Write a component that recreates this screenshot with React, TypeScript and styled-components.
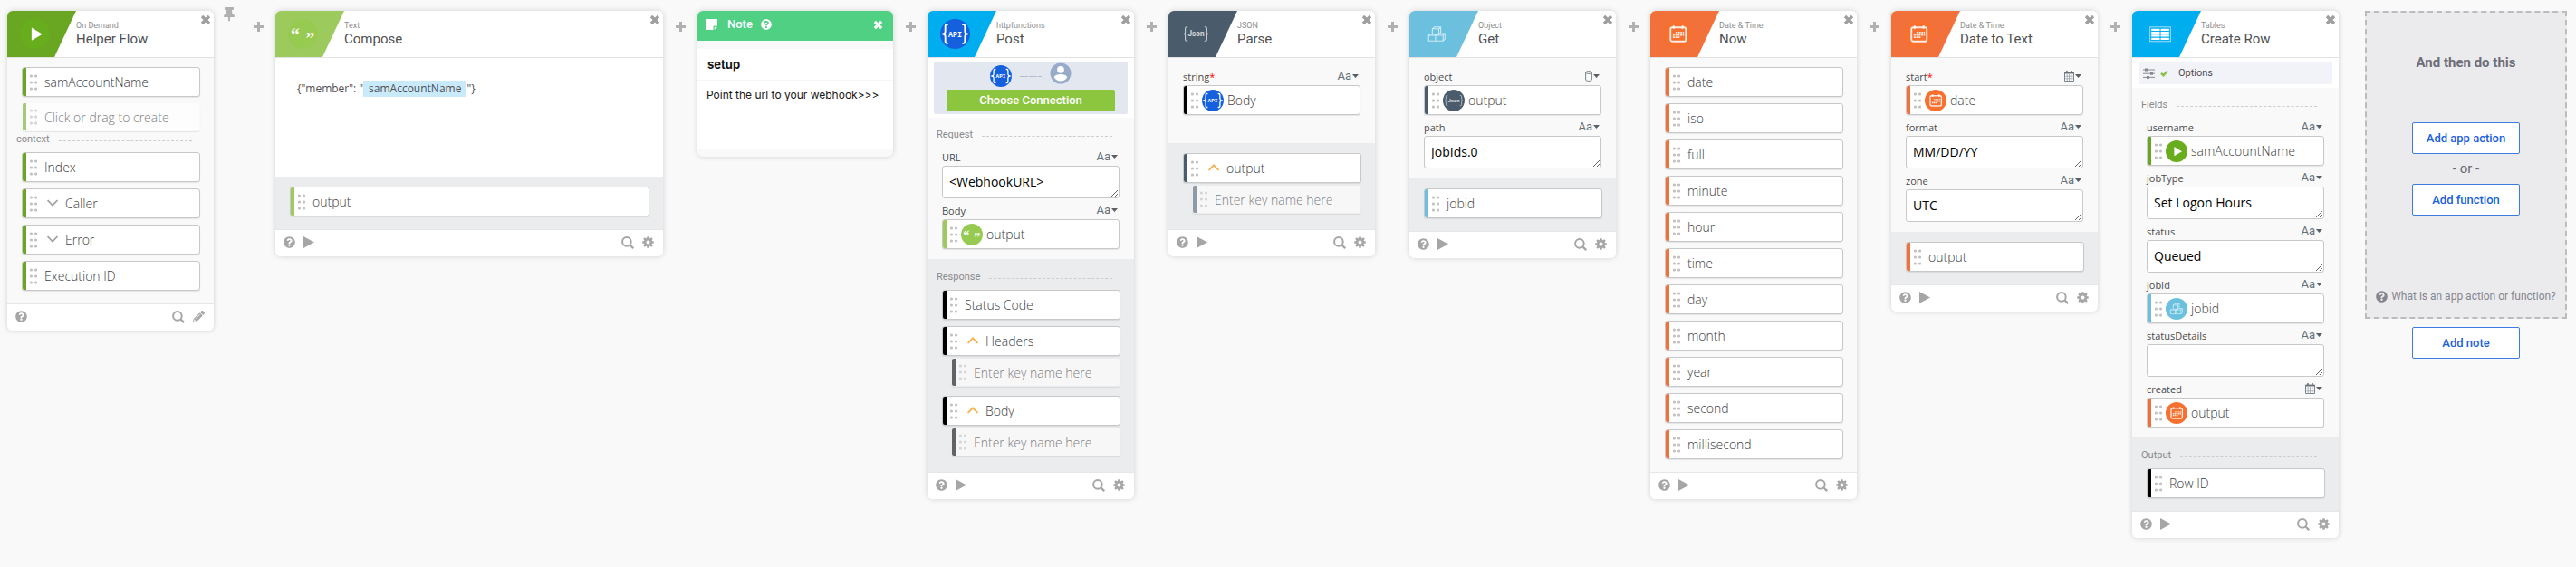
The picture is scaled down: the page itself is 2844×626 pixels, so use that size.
import React from 'react';
import styled, { createGlobalStyle } from 'styled-components';
import { FaPencilAlt, FaThumbtack, FaQuestionCircle } from 'react-icons/fa';

const ui = 'Roboto, "Liberation Sans", sans-serif';
const body = '"Open Sans", "Noto Sans", sans-serif';

const GlobalStyle = createGlobalStyle`
  *, *::before { box-sizing: border-box; }
  body { margin: 0; background: #f9f9f9; color: #58585b; font-family: ${body}; }
  button, input, textarea { font: inherit; color: inherit; margin: 0; }
  button { background: none; border: 0; padding: 0; cursor: pointer; }
  svg { display: block; flex: none; }
`;

/* ---------- layout ---------- */

const Canvas = styled.main`
  display: flex;
  align-items: flex-start;
  padding: 8px 10px 24px 8px;
  overflow-x: auto;
`;

const Slot = styled.div<{ $width: number }>`
  flex: 0 0 ${(p) => p.$width}px;
  display: flex;
  justify-content: center;
  color: #b1b1b1;
`;

const InsertButton = styled.button`
  margin-top: 16px;
  color: #b1b1b1;
`;

const PinButton = styled.button`
  padding-left: 4px;
  color: #b1b1b1;
`;

const CardBox = styled.section<{ $width?: number; $grow?: boolean }>`
  flex: ${(p) => (p.$grow ? 1 : 0)} 0 ${(p) => p.$width || 228}px;
  margin-top: 4px;
  border-radius: 6px;
  background: #f9f9f9;
  box-shadow: 0 0 6px rgba(0, 0, 0, 0.16);
  overflow: hidden;
`;

const Header = styled.header`
  display: flex;
  height: 52px;
  background: #fff;
  border-bottom: 1px solid #e2e2e3;
`;

const Banner = styled.div<{ $color: string }>`
  flex: 0 0 76px;
  padding: 9px 0 0 14px;
  background: ${(p) => p.$color};
  clip-path: polygon(0 0, 100% 0, 52px 100%, 0 100%);
`;

const Heading = styled.div`
  flex: 1;
  padding: 10px 0 0;
  font-family: ${ui};
`;

const AppName = styled.div`
  font-size: 9px;
  line-height: 12px;
  color: #8d8d8d;
`;

const Title = styled.h2`
  margin: 0;
  font-size: 15px;
  line-height: 18px;
  font-weight: 400;
  color: #505053;
`;

const CloseButton = styled.button`
  align-self: flex-start;
  margin: 4px 3px 0 0;
  color: #9f9f9f;
`;

const Inputs = styled.div<{ $bottom?: number }>`
  padding: 13px 16px ${(p) => p.$bottom || 11}px;
`;

const Fields = styled.div`
  padding: 0 16px 11px;
`;

const Outputs = styled.div`
  padding: 11px 15px 14px 16px;
  background: #ebecee;
`;

const LabelledOutputs = styled(Outputs)`
  padding-top: 0;
`;

const Plain = styled.div`
  padding: 10px 15px 14px 16px;
`;

const TileList = styled.ul`
  display: flex;
  flex-direction: column;
  gap: 7px;
  margin: 0;
  padding: 0;
  list-style: none;
`;

const SectionTitle = styled.h3<{ $height: number; $top: number }>`
  display: flex;
  align-items: flex-start;
  gap: 10px;
  height: ${(p) => p.$height}px;
  margin: 0;
  padding: ${(p) => p.$top}px 24px 0 10px;
  font: 400 11px/14px ${ui};
  color: #8a8a8d;
  &::after {
    content: '';
    flex: 1;
    margin-top: 8px;
    border-top: 1px dashed #cdcdcf;
  }
`;

const InsetTitle = styled(SectionTitle)`
  margin: 0 -15px 0 -16px;
`;

/* ---------- tiles ---------- */

const TileBox = styled.div`
  display: flex;
  align-items: center;
  height: 33px;
  border: 1px solid #c8c8ca;
  border-radius: 3px;
  background: #fff;
  box-shadow: 0 1px 1px rgba(0, 0, 0, 0.08);
  font: 300 14px/18px ${body};
  color: #404042;
  overflow: hidden;
`;

const NewTileBox = styled(TileBox)<{ $nested?: boolean }>`
  height: 32px;
  margin: ${(p) => (p.$nested ? '2px 0 3px 10px' : '-1px 0 0')};
  border-color: transparent;
  background: rgba(255, 255, 255, 0.6);
  background-clip: padding-box;
`;

const Bar = styled.span<{ $color: string; $faded?: boolean }>`
  align-self: stretch;
  flex: 0 0 4px;
  margin-right: 4px;
  background: ${(p) => p.$color};
  opacity: ${(p) => (p.$faded ? 0.6 : 1)};
`;

const TileText = styled.span`
  padding-left: 8px;
`;

const SourceText = styled.span`
  padding-left: 4px;
`;

const ExpandButton = styled.button<{ $open?: boolean }>`
  margin: 0 0 2px 11px;
  color: ${(p) => (p.$open ? '#f9b04f' : '#a5a5a5')};
`;

const Source = styled.span`
  padding-left: 4px;
`;

const KeyInput = styled.input`
  flex: 1;
  min-width: 0;
  height: 28px;
  padding: 0 0 0 8px;
  border: 0;
  outline: 0;
  background: none;
  &::placeholder { color: #808082; opacity: 1; }
`;

/* ---------- fields ---------- */

const FieldBox = styled.div`
  & + & { margin-top: 6px; }
`;

const FieldHead = styled.div`
  display: flex;
  justify-content: space-between;
  align-items: flex-start;
  height: 17px;
  padding-right: 2px;
`;

const FieldLabel = styled.label`
  font: 400 11px/16px ${body};
  color: #4a4a4d;
`;

const Required = styled.span`
  color: #f00;
`;

const TypeButton = styled.button`
  display: flex;
  align-items: center;
  gap: 1px;
  height: 14px;
  font: 400 13px/14px ${ui};
  color: #66707a;
`;

const TextArea = styled.textarea`
  display: block;
  width: 100%;
  height: 36px;
  padding: 7px;
  border: 1px solid #c8c8ca;
  border-radius: 3px;
  outline: 0;
  background: #fff;
  font: 400 14px/19px ${body};
  color: #000;
  resize: vertical;
  overflow: hidden;
`;

/* ---------- compose ---------- */

const Template = styled.div`
  min-height: 131px;
  padding: 24px;
  background: #fff;
  font-size: 12px;
  line-height: 20px;
  color: #505053;
`;

const Token = styled.span`
  display: inline-block;
  padding: 0 6px;
  line-height: 18px;
  background: #c9eafb;
`;

/* ---------- connection and options ---------- */

const Strip = styled.div`
  padding: 4px 7px;
  background: #fff;
`;

const Connection = styled.div`
  height: 58px;
  padding: 0 14px;
  border-radius: 2px;
  background: #e3e7ef;
`;

const ConnectionArt = styled.div`
  display: flex;
  justify-content: center;
  align-items: center;
  gap: 9px;
  height: 31px;
  padding-bottom: 3px;
  svg:first-child { margin-top: 3px; }
  svg:last-child { margin-bottom: 3px; }
`;

const ConnectButton = styled.button`
  display: block;
  width: 100%;
  height: 24px;
  border-radius: 2px;
  background: #8cc63f;
  font: 500 13px/22px ${ui};
  color: #fff;
`;

const Options = styled.button`
  display: flex;
  align-items: center;
  width: 100%;
  height: 25px;
  padding: 0 5px;
  border-radius: 2px;
  background: #f2f3f8;
  font: 400 11px/14px ${ui};
  color: #505053;
`;

const OptionsIcons = styled.span`
  display: flex;
  align-items: center;
  gap: 6px;
  margin-right: 11px;
  color: #8a8a8a;
`;

/* ---------- footer ---------- */

const FooterBar = styled.footer`
  display: flex;
  align-items: center;
  gap: 9px;
  height: 30px;
  padding: 0 10px 2px 9px;
  border-top: 1px solid #e6e6e7;
  background: #fff;
  color: #a6a6a6;
`;

const FooterButton = styled.button<{ $push?: boolean }>`
  margin-left: ${(p) => (p.$push ? 'auto' : '0')};
  color: inherit;
`;

/* ---------- note ---------- */

const NoteHeader = styled.header`
  display: flex;
  align-items: center;
  height: 33px;
  padding: 0 11px 3px 10px;
  background: #4fd083;
  font: 500 13px/18px ${ui};
  color: #fff;
`;

const NoteName = styled.span`
  margin: 0 9px 0 11px;
`;

const NoteClose = styled.button`
  margin-left: auto;
  color: #fff;
`;

const NoteTitle = styled.input`
  display: block;
  width: 100%;
  height: 35px;
  margin-top: 9px;
  padding: 0 11px;
  border: 0;
  border-bottom: 1px solid #f5f5f5;
  outline: 0;
  background: #fff;
  font: 700 13px/18px Inter, sans-serif;
  color: #17171a;
`;

const NoteText = styled.textarea`
  display: block;
  width: 100%;
  height: 75px;
  margin-bottom: 9px;
  padding: 7px 10px;
  border: 0;
  outline: 0;
  background: #fff;
  font: 400 12px/18px Inter, sans-serif;
  color: #17171a;
  resize: none;
`;

/* ---------- add panel ---------- */

const AddColumn = styled.aside`
  flex: 0 0 223px;
  display: flex;
  flex-direction: column;
  align-items: center;
  gap: 9px;
  margin: 4px 0 0 29px;
  font-family: ${ui};
`;

const AddPanel = styled.div`
  display: flex;
  flex-direction: column;
  align-items: center;
  width: 100%;
  min-height: 340px;
  padding: 45px 0 13px;
  border: 2px dashed #bcbcbc;
  background: #ebebed;
`;

const AddTitle = styled.h2`
  margin: 0 0 56px;
  font-size: 15px;
  line-height: 20px;
  font-weight: 700;
  color: #6e6e78;
`;

const Or = styled.span`
  font-size: 15px;
  line-height: 33px;
  color: #6b6b70;
`;

const AddButton = styled.button`
  width: 119px;
  height: 35px;
  border: 1px solid #3c7be0;
  border-radius: 2px;
  background: #fff;
  font-size: 13px;
  font-weight: 500;
  line-height: 18px;
  color: #1a62dc;
`;

const HelpLink = styled.a`
  display: flex;
  align-items: center;
  gap: 4px;
  margin-top: auto;
  font-size: 12px;
  line-height: 20px;
  color: #868690;
  text-decoration: none;
`;

/* ---------- icons ---------- */

const Cross = ({ size = 12 }: { size?: number }) => (
  <svg width={size} height={size} viewBox="0 0 12 12" stroke="currentColor" strokeWidth="3.4">
    <path d="M2 2l8 8M10 2l-8 8" />
  </svg>
);

const Plus = () => (
  <svg width="11" height="11" viewBox="0 0 11 11" stroke="currentColor" strokeWidth="3">
    <path d="M5.5 0v11M0 5.5h11" />
  </svg>
);

const Caret = () => (
  <svg width="7" height="4" viewBox="0 0 7 4" fill="#5b5f64">
    <path d="M0 0h7L3.500 4z" />
  </svg>
);

const Check = () => (
  <svg width="9" height="8" viewBox="0 0 9 8" fill="none" stroke="#86c440" strokeWidth="2.4">
    <path d="M1 3.800l2.500 2.500L8 1.500" />
  </svg>
);

const Dots = ({ faded }: { faded?: boolean }) => (
  <svg width="8" height="18" viewBox="0 0 8 18" fill={faded ? '#d6d6d6' : '#c2c2c2'}>
    {[2, 9, 16].map((y) => (
      <React.Fragment key={y}>
        <circle cx="1.5" cy={y} r="1.6" />
        <circle cx="6.5" cy={y} r="1.6" />
      </React.Fragment>
    ))}
  </svg>
);

const Chevron = ({ up }: { up?: boolean }) => (
  <svg width="12" height="8" viewBox="0 0 12 8" fill="none" stroke="currentColor" strokeWidth="1.8">
    <path d={up ? 'M.6 7L6 1.4 11.4 7' : 'M.6 1L6 6.6 11.4 1'} />
  </svg>
);

const Play = () => (
  <svg width="12" height="13" viewBox="0 0 12 13" fill="currentColor">
    <path d="M0 0l12 6.5L0 13z" />
  </svg>
);

const Search = () => (
  <svg width="14" height="14" viewBox="0 0 14 14" fill="none" stroke="currentColor" strokeWidth="2">
    <circle cx="5.9" cy="5.9" r="4.8" />
    <path d="M9.5 9.5l3.7 3.7" strokeWidth="2.3" />
  </svg>
);

const Gear = () => (
  <svg width="13" height="13" viewBox="0 0 14 14">
    <circle cx="7" cy="7" r="3.6" fill="none" stroke="currentColor" strokeWidth="2.8" />
    {[0, 45, 90, 135].map((a) => (
      <path
        key={a}
        d="M5.800 .2h2.400l.4 2.400H5.400zM5.800 13.800h2.400l.4-2.400H5.400z"
        fill="currentColor"
        transform={`rotate(${a} 7 7)`}
      />
    ))}
  </svg>
);

const CalendarMini = () => (
  <svg width="11" height="12" viewBox="0 0 11 12">
    <path d="M.5 2h10v9.500H.5z" fill="#fff" stroke="#7b848c" />
    <path d="M3 0v3M8 0v3M.5 2.700h10" stroke="#66707a" strokeWidth="1.500" />
    <path d="M1 6.200h9M1 8.800h9M3.200 4v7.500M5.500 4v7.500M7.800 4v7.500" stroke="#8d959c" strokeWidth=".7" />
  </svg>
);

const Cylinder = () => (
  <svg width="8" height="12" viewBox="0 0 8 12" fill="none" stroke="#7b848c">
    <ellipse cx="4" cy="2" rx="3.4" ry="1.4" />
    <path d="M.6 2v8c0 .8 1.500 1.400 3.400 1.400s3.400-.6 3.400-1.400V2" />
  </svg>
);

const Sliders = () => (
  <svg width="13" height="12" viewBox="0 0 13 12" stroke="currentColor">
    <path d="M0 2h13M0 6.200h13M0 10.400h13" />
    <path d="M3.500 .5v3M9.500 4.700v3M5.500 8.900v3" strokeWidth="3" />
  </svg>
);

const StickyNote = () => (
  <svg width="12" height="12" viewBox="0 0 12 12" fill="currentColor">
    <path d="M0 0h12v7.500H8.500a1 1 0 0 0-1 1V12H0zM8.700 8.700H12L8.700 12z" />
  </svg>
);

const Avatar = () => (
  <svg width="24" height="24" viewBox="0 0 24 24">
    <circle cx="12" cy="12" r="11.5" fill="#98abc9" />
    <circle cx="12" cy="7.8" r="3.9" fill="#fff" />
    <path d="M4.800 16.500c0-2.500 4.800-3.600 7.200-3.600s7.200 1.100 7.200 3.600c-1.600 2.600-4.200 4.100-7.200 4.100s-5.600-1.500-7.200-4.100z" fill="#fff" />
  </svg>
);

const Link = () => (
  <svg width="24" height="6" viewBox="0 0 24 6" stroke="#b3bdd0" strokeDasharray="4 1">
    <path d="M0 .5h24M0 5.500h24" />
  </svg>
);

type Kind = 'play' | 'quote' | 'api' | 'json' | 'cubes' | 'date' | 'table';

const circleColor: Record<Kind, string> = {
  play: '#67ad1e',
  quote: '#96ca50',
  api: '#1560dc',
  json: '#4a5c6c',
  cubes: '#6ac0df',
  date: '#f7702f',
  table: '#04adf0',
};

const glyphs: Record<Kind, React.ReactNode> = {
  play: <path d="M12.500 9.300l11.500 6.900-11.500 6.900z" fill="#fff" />,
  quote: (
    <g fill="#fff" fontFamily='"Liberation Serif", serif' fontWeight="700" fontSize="19">
      <text x="3" y="22">“</text>
      <text x="19" y="27">”</text>
    </g>
  ),
  api: (
    <g>
      <path
        d="M8.500 6H7.300C6 6 5.500 6.700 5.500 8v5c0 1.700-.6 2.500-2.300 3 1.700.5 2.300 1.300 2.300 3v5c0 1.300.5 2 1.800 2h1.200M23.500 6h1.200c1.300 0 1.800.7 1.800 2v5c0 1.700.6 2.500 2.300 3-1.700.5-2.300 1.300-2.300 3v5c0 1.300-.5 2-1.800 2h-1.200"
        fill="none"
        stroke="#fff"
        strokeWidth="1.8"
      />
      <text x="16" y="19" textAnchor="middle" fontFamily='"Liberation Mono", monospace' fontWeight="700" fontSize="8" fill="#fff">
        API
      </text>
    </g>
  ),
  json: (
    <g opacity=".75">
      <path
        d="M7 8.500H6c-1 0-1.500.5-1.500 1.500v4c0 1.200-.5 1.800-1.500 2 1 .2 1.500.8 1.500 2v4c0 1 .5 1.500 1.500 1.500h1M25 8.500h1c1 0 1.500.5 1.500 1.500v4c0 1.200.5 1.800 1.500 2-1 .2-1.500.8-1.500 2v4c0 1-.5 1.500-1.500 1.500h-1"
        fill="none"
        stroke="#fff"
      />
      <text x="16" y="18.5" textAnchor="middle" fontFamily="Roboto, sans-serif" fontWeight="700" fontSize="8" fill="#fff">
        Json
      </text>
    </g>
  ),
  cubes: (
    <g fill="none" stroke="#fff" strokeOpacity=".7" strokeLinejoin="round">
      <path d="M11 10.500h7v6h-7zM11 10.500l2-2h7l-2 2M20 8.500v6l-2 2" />
      <path d="M7 17.500h7.500v6H7zM7 17.500l2-1.500M14.500 17.500h8v6h-8zM22.500 17.500l2-2v6l-2 2M20 15.500h4.500M14.500 17.500l1.500-1" />
    </g>
  ),
  date: (
    <g fill="none" stroke="#fff" strokeOpacity=".85">
      <rect x="8" y="9" width="16.5" height="15" rx="2" strokeWidth="1.8" />
      <path d="M11.500 7v3.500M21 7v3.500" strokeWidth="2" />
      <path d="M13.500 14.500h9M10.500 17h12M10.500 19.500h8" strokeWidth="1.7" strokeDasharray="2 .6" />
    </g>
  ),
  table: (
    <g>
      <rect x="5.5" y="8.5" width="22" height="15.5" fill="none" stroke="#fff" strokeOpacity=".6" />
      <path d="M7 11.500h9M17 11.500h9M7 14.700h9M17 14.700h9M7 17.900h9M17 17.900h9M7 21.100h9M17 21.100h9" stroke="#fff" strokeWidth="2.2" />
    </g>
  ),
};

const AppIcon = ({ kind, size }: { kind: Kind; size: number }) => (
  <svg width={size} height={size} viewBox="0 0 32 32" aria-hidden="true">
    <circle cx="16" cy="16" r="16" fill={circleColor[kind]} />
    {glyphs[kind]}
  </svg>
);

/* ---------- parts ---------- */

const GREEN = '#69a622';
const LIME = '#9cca5c';
const BLUE = '#00adef';
const SLATE = '#4a5c6c';
const SKY = '#6cc0de';
const ORANGE = '#f2713a';

type TileProps = { color: string; text: string; expand?: 'open' | 'closed'; source?: Kind };

const Tile = ({ color, text, expand, source }: TileProps) => (
  <TileBox>
    <Bar $color={color} />
    <Dots />
    {expand && (
      <ExpandButton $open={expand === 'open'} aria-label={`Toggle ${text}`}>
        <Chevron up={expand === 'open'} />
      </ExpandButton>
    )}
    {source ? (
      <>
        <Source>
          <AppIcon kind={source} size={24} />
        </Source>
        <SourceText>{text}</SourceText>
      </>
    ) : (
      <TileText>{text}</TileText>
    )}
  </TileBox>
);

const NewTile = ({ color, text, nested }: { color: string; text: string; nested?: boolean }) => (
  <NewTileBox $nested={nested}>
    <Bar $color={color} $faded />
    <Dots faded />
    <KeyInput placeholder={text} aria-label={text} />
  </NewTileBox>
);

type FieldProps = {
  id: string;
  label: string;
  required?: boolean;
  type?: 'text' | 'date' | 'object';
  value?: string;
  tile?: TileProps;
};

const Field = ({ id, label, required, type = 'text', value = '', tile }: FieldProps) => (
  <FieldBox role={tile ? 'group' : undefined} aria-labelledby={tile ? `${id}-label` : undefined}>
    <FieldHead>
      <FieldLabel id={`${id}-label`} as={tile ? 'span' : 'label'} {...(tile ? {} : { htmlFor: id })}>
        {label}
        {required && <Required>*</Required>}
      </FieldLabel>
      <TypeButton aria-label={`${label} type`}>
        {type === 'text' ? 'Aa' : type === 'date' ? <CalendarMini /> : <Cylinder />}
        <Caret />
      </TypeButton>
    </FieldHead>
    {tile ? <Tile {...tile} /> : <TextArea id={id} defaultValue={value} rows={1} spellCheck={false} />}
  </FieldBox>
);

type CardProps = {
  app: string;
  title: string;
  color: string;
  icon: Kind;
  grow?: boolean;
  width?: number;
  trigger?: boolean;
  children: React.ReactNode;
};

const Card = ({ app, title, color, icon, grow, width, trigger, children }: CardProps) => (
  <CardBox $grow={grow} $width={width}>
    <Header>
      <Banner $color={color}>
        <AppIcon kind={icon} size={33} />
      </Banner>
      <Heading>
        <AppName>{app}</AppName>
        <Title>{title}</Title>
      </Heading>
      <CloseButton aria-label="Remove card">
        <Cross />
      </CloseButton>
    </Header>
    {children}
    <FooterBar>
      <FooterButton aria-label="Help">
        <FaQuestionCircle size={13} />
      </FooterButton>
      {!trigger && (
        <FooterButton aria-label="Run">
          <Play />
        </FooterButton>
      )}
      <FooterButton $push aria-label="Search">
        <Search />
      </FooterButton>
      <FooterButton aria-label={trigger ? 'Edit' : 'Settings'}>
        {trigger ? <FaPencilAlt size={13} /> : <Gear />}
      </FooterButton>
    </FooterBar>
  </CardBox>
);

const Insert = () => (
  <Slot $width={38}>
    <InsertButton aria-label="Insert step">
      <Plus />
    </InsertButton>
  </Slot>
);

const Items = ({ children }: { children: React.ReactNode }) => (
  <TileList>
    {React.Children.map(children, (child) => (
      <li>{child}</li>
    ))}
  </TileList>
);

const nowParts = ['date', 'iso', 'full', 'minute', 'hour', 'time', 'day', 'month', 'year', 'second', 'millisecond'];

export default function App() {
  return (
    <>
      <GlobalStyle />
      <Canvas>
        <Card app="On Demand" title="Helper Flow" color={GREEN} icon="play" trigger>
          <Plain>
            <Items>
              <Tile color={GREEN} text="samAccountName" />
              <NewTile color={GREEN} text="Click or drag to create" />
            </Items>
            <InsetTitle $height={23} $top={2}>context</InsetTitle>
            <Items>
              <Tile color={GREEN} text="Index" />
              <Tile color={GREEN} text="Caller" expand="closed" />
              <Tile color={GREEN} text="Error" expand="closed" />
              <Tile color={GREEN} text="Execution ID" />
            </Items>
          </Plain>
        </Card>
        <Slot $width={30}>
          <PinButton aria-label="Pin">
            <FaThumbtack size={16} />
          </PinButton>
        </Slot>
        <Insert />

        <Card app="Text" title="Compose" color={LIME} icon="quote" width={428} grow>
          <Template>
            {'{"member": "'}
            <Token>samAccountName</Token>
            {'"}'}
          </Template>
          <Outputs>
            <Tile color={LIME} text="output" />
          </Outputs>
        </Card>
        <Insert />

        <CardBox $width={216}>
          <NoteHeader>
            <StickyNote />
            <NoteName>Note</NoteName>
            <FaQuestionCircle size={12} />
            <NoteClose aria-label="Remove note">
              <Cross size={11} />
            </NoteClose>
          </NoteHeader>
          <NoteTitle aria-label="Note title" defaultValue="setup" />
          <NoteText aria-label="Note text" defaultValue="Point the url to your webhook>>>" spellCheck={false} />
        </CardBox>
        <Insert />

        <Card app="httpfunctions" title="Post" color={BLUE} icon="api">
          <Strip>
            <Connection>
              <ConnectionArt>
                <AppIcon kind="api" size={24} />
                <Link />
                <Avatar />
              </ConnectionArt>
              <ConnectButton>Choose Connection</ConnectButton>
            </Connection>
          </Strip>
          <SectionTitle $height={36} $top={12}>Request</SectionTitle>
          <Fields>
            <Field id="url" label="URL" value="<WebhookURL>" />
            <Field id="body" label="Body" tile={{ color: LIME, text: 'output', source: 'quote' }} />
          </Fields>
          <LabelledOutputs>
            <InsetTitle $height={34} $top={13}>Response</InsetTitle>
            <Items>
              <Tile color="#000" text="Status Code" />
              <>
                <Tile color="#000" text="Headers" expand="open" />
                <NewTile color="#000" text="Enter key name here" nested />
              </>
              <>
                <Tile color="#000" text="Body" expand="open" />
                <NewTile color="#000" text="Enter key name here" nested />
              </>
            </Items>
          </LabelledOutputs>
        </Card>
        <Insert />

        <Card app="JSON" title="Parse" color={SLATE} icon="json">
          <Inputs $bottom={31}>
            <Field id="string" label="string" required tile={{ color: '#000', text: 'Body', source: 'api' }} />
          </Inputs>
          <Outputs>
            <Tile color={SLATE} text="output" expand="open" />
            <NewTile color={SLATE} text="Enter key name here" nested />
          </Outputs>
        </Card>
        <Insert />

        <Card app="Object" title="Get" color={SKY} icon="cubes">
          <Inputs>
            <Field id="object" label="object" type="object" tile={{ color: SLATE, text: 'output', source: 'json' }} />
            <Field id="path" label="path" value="JobIds.0" />
          </Inputs>
          <Outputs>
            <Tile color={SKY} text="jobid" />
          </Outputs>
        </Card>
        <Insert />

        <Card app="Date & Time" title="Now" color={ORANGE} icon="date">
          <Plain>
            <Items>
              {nowParts.map((part) => (
                <Tile key={part} color={ORANGE} text={part} />
              ))}
            </Items>
          </Plain>
        </Card>
        <Insert />

        <Card app="Date & Time" title="Date to Text" color={ORANGE} icon="date">
          <Inputs>
            <Field id="start" label="start" required type="date" tile={{ color: ORANGE, text: 'date', source: 'date' }} />
            <Field id="format" label="format" value="MM/DD/YY" />
            <Field id="zone" label="zone" value="UTC" />
          </Inputs>
          <Outputs>
            <Tile color={ORANGE} text="output" />
          </Outputs>
        </Card>
        <Insert />

        <Card app="Tables" title="Create Row" color={BLUE} icon="table">
          <Strip>
            <Options>
              <OptionsIcons>
                <Sliders />
                <Check />
              </OptionsIcons>
              Options
            </Options>
          </Strip>
          <SectionTitle $height={36} $top={12}>Fields</SectionTitle>
          <Fields>
            <Field id="username" label="username" tile={{ color: GREEN, text: 'samAccountName', source: 'play' }} />
            <Field id="jobType" label="jobType" value="Set Logon Hours" />
            <Field id="status" label="status" value="Queued" />
            <Field id="jobId" label="jobId" tile={{ color: SKY, text: 'jobid', source: 'cubes' }} />
            <Field id="statusDetails" label="statusDetails" />
            <Field id="created" label="created" type="date" tile={{ color: ORANGE, text: 'output', source: 'date' }} />
          </Fields>
          <LabelledOutputs>
            <InsetTitle $height={34} $top={13}>Output</InsetTitle>
            <Tile color="#000" text="Row ID" />
          </LabelledOutputs>
        </Card>

        <AddColumn>
          <AddPanel>
            <AddTitle>And then do this</AddTitle>
            <AddButton>Add app action</AddButton>
            <Or>- or -</Or>
            <AddButton>Add function</AddButton>
            <HelpLink href="#help">
              <FaQuestionCircle size={13} />
              What is an app action or function?
            </HelpLink>
          </AddPanel>
          <AddButton>Add note</AddButton>
        </AddColumn>
      </Canvas>
    </>
  );
}
